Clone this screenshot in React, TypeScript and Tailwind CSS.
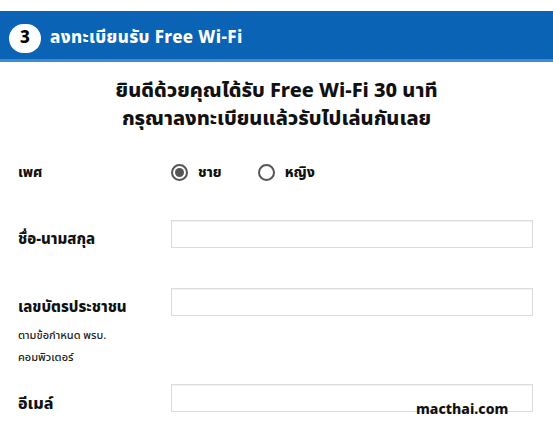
const FONT = "font-['Noto_Sans_Thai','Noto_Sans','Liberation_Sans',sans-serif]";

function Radio({ checked, label }: { checked: boolean; label: string }) {
  return (
    <label className="flex items-center gap-[10px]">
      <span className="flex h-[17px] w-[17px] items-center justify-center rounded-full border-2 border-[#555] bg-white">
        {checked && <span className="h-[9px] w-[9px] rounded-full bg-[#555]" />}
      </span>
      <span className="text-[14px] font-extrabold text-[#111]">{label}</span>
    </label>
  );
}

function TextInput() {
  return <div className="h-[28px] flex-1 border border-[#dcdcdc] bg-white shadow-[inset_0_1px_1px_rgba(0,0,0,0.06)]" />;
}

export default function App() {
  return (
    <div className={`relative h-[426px] w-[553px] overflow-hidden bg-white pt-[11px] ${FONT}`}>
      {/* หัวข้อขั้นตอน */}
      <div className="flex h-[51px] items-center gap-[9px] border-b-[3px] border-[#3d8ad6] bg-[#0b63b5] pt-[7px] pl-[9px]">
        <span className="flex h-[29px] w-[32px] items-center justify-center rounded-[15px] bg-white text-[17px] font-extrabold text-black">
          3
        </span>
        <span className="text-[17px] font-extrabold tracking-[0.4px] text-white">ลงทะเบียนรับ Free Wi-Fi</span>
      </div>

      {/* ข้อความต้อนรับ */}
      <div className="mt-[15px] text-center text-[20px] leading-[28px] font-extrabold text-[#111]">
        <p>ยินดีด้วยคุณได้รับ Free Wi-Fi 30 นาที</p>
        <p>กรุณาลงทะเบียนแล้วรับไปเล่นกันเลย</p>
      </div>

      {/* ฟอร์ม */}
      <div className="mt-[26px] flex flex-col pr-[20px] pl-[18px]">
        <div className="flex h-[26px] items-center">
          <span className="w-[153px] text-[14px] font-extrabold text-[#111]">เพศ</span>
          <div className="flex items-center gap-[36px]">
            <Radio checked label="ชาย" />
            <Radio checked={false} label="หญิง" />
          </div>
        </div>

        <div className="mt-[35px] flex items-start">
          <span className="mt-[10px] w-[153px] text-[15px] leading-[20px] font-extrabold text-[#111]">ชื่อ-นามสกุล</span>
          <TextInput />
        </div>

        <div className="mt-[38px] flex items-start">
          <div className="w-[153px]">
            <p className="mt-[10px] text-[15px] leading-[20px] font-extrabold text-[#111]">เลขบัตรประชาชน</p>
            <p className="mt-[7px] text-[11px] leading-[22px] font-medium text-[#222]">ตามข้อกำหนด พรบ.</p>
            <p className="text-[11px] leading-[22px] font-medium text-[#222]">คอมพิวเตอร์</p>
          </div>
          <TextInput />
        </div>

        <div className="mt-[15px] flex items-start">
          <span className="mt-[10px] w-[153px] text-[16px] leading-[20px] font-extrabold text-[#111]">อีเมล์</span>
          <TextInput />
        </div>
      </div>

      {/* ลายน้ำ */}
      <span className="absolute top-[399px] left-[416px] text-[14px] font-extrabold text-[#111]">macthai.com</span>
    </div>
  );
}
